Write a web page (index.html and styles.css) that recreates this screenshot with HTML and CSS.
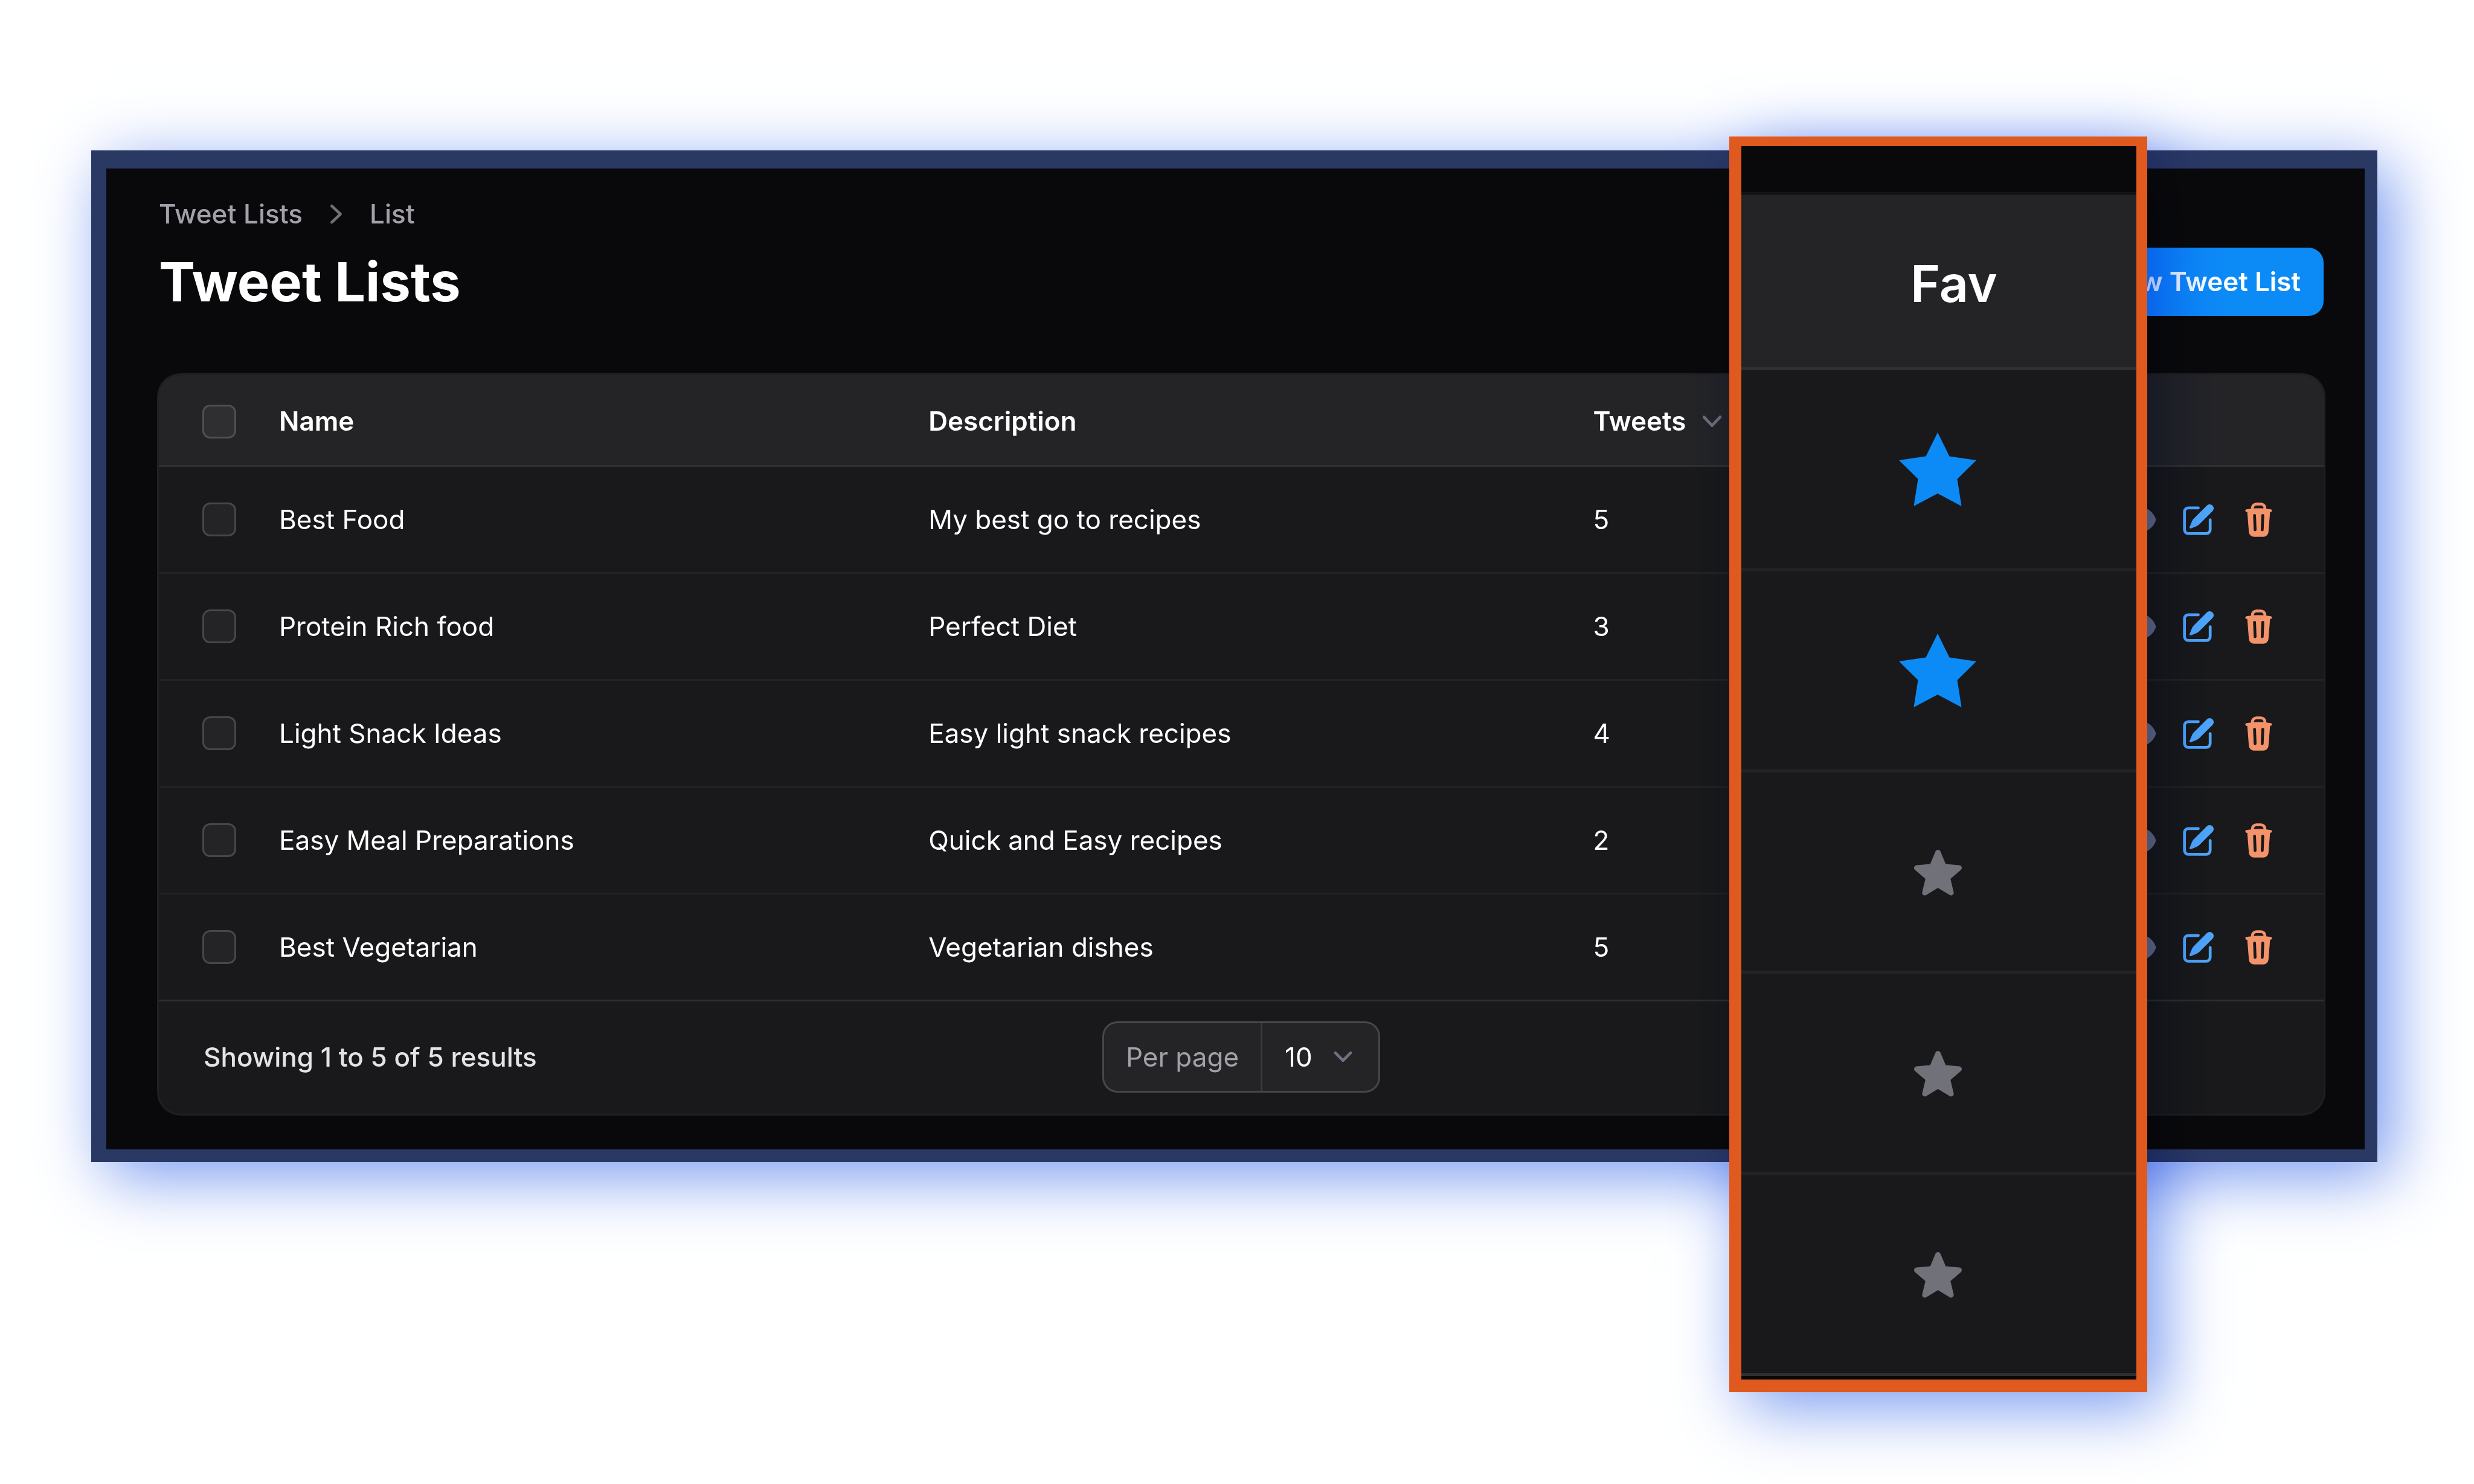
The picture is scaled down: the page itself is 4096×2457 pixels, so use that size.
FILE: index.html
```html
<!DOCTYPE html>
<html lang="en">
<head>
<meta charset="utf-8">
<meta name="viewport" content="width=device-width, initial-scale=1">
<title>Tweet Lists</title>
<link rel="stylesheet" href="styles.css">
</head>
<body>
<svg class="sprite" aria-hidden="true">
  <symbol id="i-right" viewBox="0 0 20 20"><path fill-rule="evenodd" d="M7.21 14.77a.75.75 0 0 1 .02-1.06L11.168 10 7.23 6.29a.75.75 0 1 1 1.04-1.08l4.5 4.25a.75.75 0 0 1 0 1.08l-4.5 4.25a.75.75 0 0 1-1.06-.02Z"/></symbol>
  <symbol id="i-down" viewBox="0 0 20 20"><path fill-rule="evenodd" d="M5.23 7.21a.75.75 0 0 1 1.06.02L10 11.168l3.71-3.938a.75.75 0 1 1 1.08 1.04l-4.25 4.5a.75.75 0 0 1-1.08 0l-4.25-4.5a.75.75 0 0 1 .02-1.06Z"/></symbol>
  <symbol id="i-eye" viewBox="0 0 20 20"><path d="M10 12.5a2.5 2.5 0 1 0 0-5 2.5 2.5 0 0 0 0 5Z"/><path fill-rule="evenodd" d="M.664 10.59a1.651 1.651 0 0 1 0-1.186A10.004 10.004 0 0 1 10 3c4.257 0 7.893 2.66 9.336 6.41.147.381.146.804 0 1.186A10.004 10.004 0 0 1 10 17c-4.257 0-7.893-2.66-9.336-6.41ZM14 10a4 4 0 1 1-8 0 4 4 0 0 1 8 0Z"/></symbol>
  <symbol id="i-edit" viewBox="0 0 20 20"><path d="m5.433 13.917 1.262-3.155A4 4 0 0 1 7.58 9.42l6.92-6.918a2.121 2.121 0 0 1 3 3l-6.92 6.918c-.383.383-.84.685-1.343.886l-3.154 1.262a.5.5 0 0 1-.65-.65Z"/><path d="M3.5 5.75c0-.69.56-1.25 1.25-1.25H10A.75.75 0 0 0 10 3H4.75A2.75 2.75 0 0 0 2 5.75v9.5A2.75 2.75 0 0 0 4.75 18h9.5A2.75 2.75 0 0 0 17 15.25V10a.75.75 0 0 0-1.5 0v5.25c0 .69-.56 1.25-1.25 1.25h-9.5c-.69 0-1.25-.56-1.25-1.25v-9.5Z"/></symbol>
  <symbol id="i-trash" viewBox="0 0 20 20"><path fill-rule="evenodd" d="M8.75 1A2.75 2.75 0 0 0 6 3.75v.443c-.795.077-1.584.176-2.365.298a.75.75 0 1 0 .23 1.482l.149-.022.841 10.518A2.75 2.75 0 0 0 7.596 19h4.807a2.75 2.75 0 0 0 2.742-2.53l.841-10.52.149.023a.75.75 0 0 0 .23-1.482A41.03 41.03 0 0 0 14 4.193V3.75A2.75 2.75 0 0 0 11.25 1h-2.5ZM10 4c.84 0 1.673.025 2.5.075V3.75c0-.69-.56-1.25-1.25-1.25h-2.5c-.69 0-1.25.56-1.25 1.25v.325C8.327 4.025 9.16 4 10 4ZM8.58 7.72a.75.75 0 0 0-1.5.06l.3 7.5a.75.75 0 1 0 1.5-.06l-.3-7.5Zm4.34.06a.75.75 0 1 0-1.5-.06l-.3 7.5a.75.75 0 1 0 1.5.06l.3-7.5Z"/></symbol>
  <symbol id="i-star" viewBox="0 0 20 20"><path d="M10.868 2.884c-.321-.772-1.415-.772-1.736 0l-1.83 4.401-4.753.381c-.833.067-1.171 1.107-.536 1.651l3.62 3.102-1.106 4.637c-.194.813.691 1.456 1.405 1.02L10 15.591l4.069 2.485c.713.436 1.598-.207 1.404-1.02l-1.106-4.637 3.62-3.102c.635-.544.297-1.584-.536-1.65l-4.752-.382-1.831-4.401Z"/></symbol>
  <symbol id="i-star-on" viewBox="0 0 128 122"><path d="M64 0 83.5 39.5 128 46 96.5 77 103.5 122 64 101 24.5 122 31.5 77 0 46 44.5 39.5Z"/></symbol>
</svg>

<div class="stage">
  <main class="window">
    <header class="page-head">
      <nav class="crumbs" aria-label="Breadcrumb">
        <a href="#">Tweet Lists</a>
        <svg class="icon" aria-hidden="true"><use href="#i-right"/></svg>
        <a href="#">List</a>
      </nav>
      <div class="title-row">
        <h1>Tweet Lists</h1>
        <button type="button" class="primary">New Tweet List</button>
      </div>
    </header>

    <section class="card">
      <table class="lists">
        <colgroup><col class="c-check"><col class="c-name"><col class="c-desc"><col class="c-count"><col></colgroup>
        <thead>
          <tr>
            <th class="pick"><input type="checkbox" aria-label="Select all"></th>
            <th>Name</th>
            <th>Description</th>
            <th><button type="button" class="sort">Tweets <svg class="icon" aria-hidden="true"><use href="#i-down"/></svg></button></th>
            <th></th>
          </tr>
        </thead>
        <tbody>
          <tr>
            <td class="pick"><input type="checkbox" aria-label="Select Best Food"></td>
            <td>Best Food</td><td>My best go to recipes</td><td>5</td>
            <td><div class="actions">
              <button type="button" class="view" aria-label="View"><svg class="icon"><use href="#i-eye"/></svg></button>
              <button type="button" class="edit" aria-label="Edit"><svg class="icon"><use href="#i-edit"/></svg></button>
              <button type="button" class="delete" aria-label="Delete"><svg class="icon"><use href="#i-trash"/></svg></button>
            </div></td>
          </tr>
          <tr>
            <td class="pick"><input type="checkbox" aria-label="Select Protein Rich food"></td>
            <td>Protein Rich food</td><td>Perfect Diet</td><td>3</td>
            <td><div class="actions">
              <button type="button" class="view" aria-label="View"><svg class="icon"><use href="#i-eye"/></svg></button>
              <button type="button" class="edit" aria-label="Edit"><svg class="icon"><use href="#i-edit"/></svg></button>
              <button type="button" class="delete" aria-label="Delete"><svg class="icon"><use href="#i-trash"/></svg></button>
            </div></td>
          </tr>
          <tr>
            <td class="pick"><input type="checkbox" aria-label="Select Light Snack Ideas"></td>
            <td>Light Snack Ideas</td><td>Easy light snack recipes</td><td>4</td>
            <td><div class="actions">
              <button type="button" class="view" aria-label="View"><svg class="icon"><use href="#i-eye"/></svg></button>
              <button type="button" class="edit" aria-label="Edit"><svg class="icon"><use href="#i-edit"/></svg></button>
              <button type="button" class="delete" aria-label="Delete"><svg class="icon"><use href="#i-trash"/></svg></button>
            </div></td>
          </tr>
          <tr>
            <td class="pick"><input type="checkbox" aria-label="Select Easy Meal Preparations"></td>
            <td>Easy Meal Preparations</td><td>Quick and Easy recipes</td><td>2</td>
            <td><div class="actions">
              <button type="button" class="view" aria-label="View"><svg class="icon"><use href="#i-eye"/></svg></button>
              <button type="button" class="edit" aria-label="Edit"><svg class="icon"><use href="#i-edit"/></svg></button>
              <button type="button" class="delete" aria-label="Delete"><svg class="icon"><use href="#i-trash"/></svg></button>
            </div></td>
          </tr>
          <tr>
            <td class="pick"><input type="checkbox" aria-label="Select Best Vegetarian"></td>
            <td>Best Vegetarian</td><td>Vegetarian dishes</td><td>5</td>
            <td><div class="actions">
              <button type="button" class="view" aria-label="View"><svg class="icon"><use href="#i-eye"/></svg></button>
              <button type="button" class="edit" aria-label="Edit"><svg class="icon"><use href="#i-edit"/></svg></button>
              <button type="button" class="delete" aria-label="Delete"><svg class="icon"><use href="#i-trash"/></svg></button>
            </div></td>
          </tr>
        </tbody>
      </table>
      <footer class="pager">
        <span class="summary">Showing 1 to 5 of 5 results</span>
        <div class="per-page">
          <label for="per-page">Per page</label>
          <div class="select">
            <select id="per-page"><option>10</option><option>25</option><option>50</option></select>
            <svg class="icon" viewBox="0 0 20 20" aria-hidden="true"><path d="m6 8 4 4 4-4"/></svg>
          </div>
        </div>
      </footer>
    </section>
  </main>

  <aside class="spotlight">
    <div class="spotlight-frame">
      <table class="fav">
        <thead><tr><th>Fav</th></tr></thead>
        <tbody>
          <tr><td><svg class="star on" role="img" aria-label="Favourite"><use href="#i-star-on"/></svg></td></tr>
          <tr><td><svg class="star on" role="img" aria-label="Favourite"><use href="#i-star-on"/></svg></td></tr>
          <tr><td><svg class="star" role="img" aria-label="Not favourite"><use href="#i-star"/></svg></td></tr>
          <tr><td><svg class="star" role="img" aria-label="Not favourite"><use href="#i-star"/></svg></td></tr>
          <tr><td><svg class="star" role="img" aria-label="Not favourite"><use href="#i-star"/></svg></td></tr>
        </tbody>
      </table>
    </div>
  </aside>
</div>
</body>
</html>
```
FILE: styles.css
```css
:root {
  --page: #09090b;
  --card: #19191b;
  --card-head: #242427;
  --line: #232326;
  --line-strong: #2f2f32;
  --blue: #0c8bf6;
  --glow: 24px 24px 104px #7698ef;
}

* { box-sizing: border-box; }

html { min-height: 100%; background: #fff; }

body {
  min-height: 100vh;
  margin: 0;
  padding: 249px 160px 0 151px;
  background: #fff;
  color: #fff;
  font: 400 44px/63px Inter, "Liberation Sans", sans-serif;
}

button, select {
  margin: 0;
  padding: 0;
  border: 0;
  background: none;
  color: inherit;
  font: inherit;
}

a { color: inherit; text-decoration: none; }

table { width: 100%; border-collapse: separate; border-spacing: 0; }
th, td { padding: 0; text-align: left; vertical-align: middle; }

.sprite { position: absolute; width: 0; height: 0; }
.icon { display: block; flex: none; width: 63px; height: 63px; fill: currentColor; }

.stage { position: relative; }

/* Window */
.window {
  padding: 44px 68px 59px 87px;
  border: solid #2a3964;
  border-width: 30px 21px 21px 25px;
  background: var(--page);
  box-shadow: var(--glow);
}

.crumbs {
  display: flex;
  align-items: center;
  gap: 24px;
  color: #a1a1aa;
  font-weight: 500;
}
.crumbs .icon { color: #71717a; }

.title-row {
  display: flex;
  align-items: center;
  justify-content: space-between;
  margin-top: 24px;
}
h1 { margin: 0; font-size: 90px; line-height: 113px; font-weight: 700; }

.primary {
  height: 113px;
  padding: 0 38px;
  border-radius: 25px;
  background: var(--blue);
  font-weight: 600;
}

.card {
  margin-top: 98px;
  overflow: hidden;
  border-radius: 36px;
  background: var(--card);
  box-shadow: 0 0 0 3px #202022;
}

/* Lists table */
.lists { table-layout: fixed; }
.c-check { width: 161px; }
.c-name { width: 30%; }
.c-desc { width: 30.7%; }
.c-count { width: 9%; }

.lists th, .lists td { padding: 0 38px; white-space: nowrap; }
.lists th {
  height: 152px;
  padding-top: 4px;
  border-bottom: 3px solid var(--line-strong);
  background: var(--card-head);
  font-weight: 600;
}
.lists td { height: 177px; border-bottom: 3px solid var(--line); }
.lists tr:last-child td { border-color: var(--line-strong); }
.lists .pick { padding-left: 72px; padding-right: 0; }

input[type="checkbox"] {
  display: block;
  appearance: none;
  width: 56px;
  height: 56px;
  margin: 0;
  border: 3px solid rgba(255, 255, 255, .2);
  border-radius: 13px;
  background: rgba(255, 255, 255, .05);
  background-clip: padding-box;
}
input[type="checkbox"]:checked { background: var(--blue); }

.sort { display: flex; align-items: center; gap: 12px; font-weight: 600; }
.sort .icon { color: #71717a; }

.lists td:last-child { padding-right: 76px; }
.actions { display: flex; justify-content: flex-end; gap: 37px; }
.view { color: #71717a; }
.edit { color: #50a9fa; }
.delete { color: #f4936a; }

/* Pager */
.pager {
  display: grid;
  grid-template-columns: 1fr auto 1fr;
  align-items: center;
  padding: 33px 74px 35px;
}
.summary { color: #e4e4e7; font-weight: 500; }

.per-page {
  display: flex;
  height: 118px;
  border: 3px solid #474749;
  border-radius: 25px;
  background: var(--card-head);
}
.per-page label {
  padding: 0 36px;
  border-right: 3px solid #39393c;
  color: #a1a1aa;
  line-height: 112px;
}
.select { position: relative; width: 192px; }
.select select { width: 100%; height: 100%; padding-left: 37px; appearance: none; }
.select .icon {
  position: absolute;
  top: 24px;
  right: 27px;
  fill: none;
  stroke: #6b7280;
  stroke-width: 1.5;
  stroke-linecap: round;
  stroke-linejoin: round;
  pointer-events: none;
}

/* Magnified column laid over the window */
.spotlight {
  position: absolute;
  top: -23px;
  right: 381px;
  width: 692px;
}
.spotlight::before {
  content: "";
  position: absolute;
  inset: 0;
  box-shadow: var(--glow);
  mix-blend-mode: multiply;
}
.spotlight-frame {
  position: relative;
  padding: 76px 0 6px;
  border: solid #e0591f;
  border-width: 16px 18px 21px 20px;
  background: var(--page);
}
.fav { background: var(--card); }
.fav th {
  height: 295px;
  padding: 8px 0 0 280px;
  border-top: 5px solid #131315;
  border-bottom: 5px solid var(--line-strong);
  background: var(--card-head);
  font-size: 84px;
  font-weight: 600;
}
.fav td { height: 333px; padding-right: 4px; border-bottom: 5px solid var(--line); }
.fav tr:last-child td { border-color: var(--line-strong); }
.star { display: block; width: 95px; height: 95px; margin: 0 auto; fill: #71717a; }
.star.on { width: 128px; height: 122px; fill: var(--blue); }
```
